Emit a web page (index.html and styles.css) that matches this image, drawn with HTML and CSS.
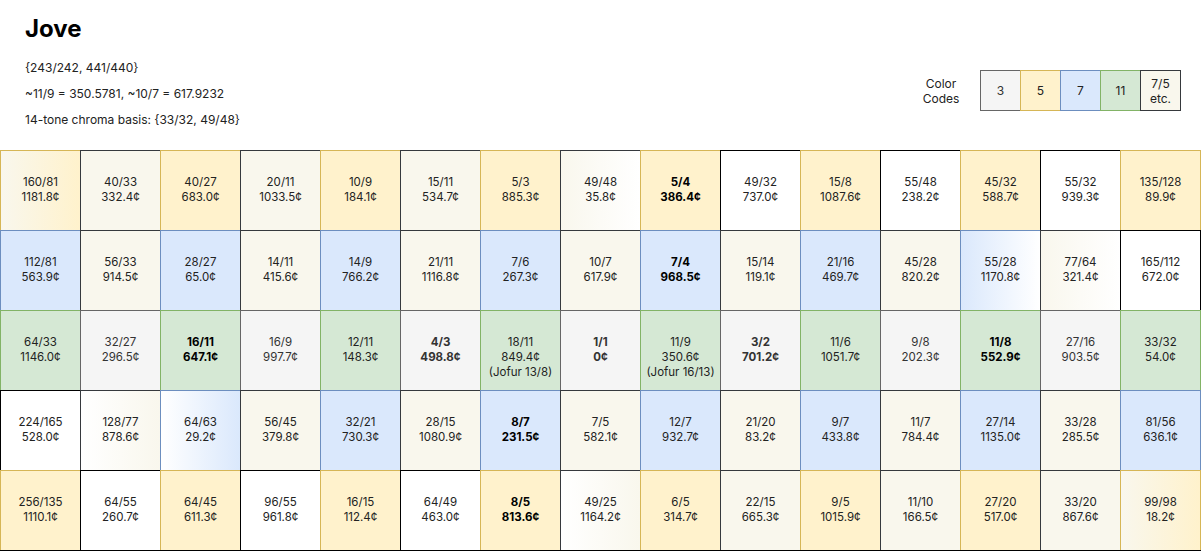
FILE: index.html
```html
<!DOCTYPE html>
<html lang="en">
<head>
<meta charset="utf-8">
<title>Jove</title>
<link rel="stylesheet" href="styles.css">
</head>
<body>
<header class="header">
  <div class="intro">
    <h1 class="title">Jove</h1>
    <p class="line">{243/242, 441/440}</p>
    <p class="line">~11/9 = 350.5781, ~10/7 = 617.9232</p>
    <p class="line">14-tone chroma basis: {33/32, 49/48}</p>
  </div>
  <div class="legend">
    <div class="legend-label">Color<br>Codes</div>
    <div class="keys">
      <div class="key gray">3</div>
      <div class="key yellow">5</div>
      <div class="key blue">7</div>
      <div class="key green">11</div>
      <div class="key etc">7/5<br>etc.</div>
    </div>
  </div>
</header>
<main class="grid">
  <div class="cell yellow g-beige-yellow">160/81<br>1181.8¢</div>
  <div class="cell etc">40/33<br>332.4¢</div>
  <div class="cell yellow">40/27<br>683.0¢</div>
  <div class="cell etc">20/11<br>1033.5¢</div>
  <div class="cell yellow">10/9<br>184.1¢</div>
  <div class="cell etc">15/11<br>534.7¢</div>
  <div class="cell yellow">5/3<br>885.3¢</div>
  <div class="cell etc g-beige-white">49/48<br>35.8¢</div>
  <div class="cell yellow bold">5/4<br>386.4¢</div>
  <div class="cell white">49/32<br>737.0¢</div>
  <div class="cell yellow">15/8<br>1087.6¢</div>
  <div class="cell white">55/48<br>238.2¢</div>
  <div class="cell yellow">45/32<br>588.7¢</div>
  <div class="cell white">55/32<br>939.3¢</div>
  <div class="cell yellow">135/128<br>89.9¢</div>

  <div class="cell blue">112/81<br>563.9¢</div>
  <div class="cell etc">56/33<br>914.5¢</div>
  <div class="cell blue">28/27<br>65.0¢</div>
  <div class="cell etc">14/11<br>415.6¢</div>
  <div class="cell blue">14/9<br>766.2¢</div>
  <div class="cell etc">21/11<br>1116.8¢</div>
  <div class="cell blue">7/6<br>267.3¢</div>
  <div class="cell etc">10/7<br>617.9¢</div>
  <div class="cell blue bold">7/4<br>968.5¢</div>
  <div class="cell etc">15/14<br>119.1¢</div>
  <div class="cell blue">21/16<br>469.7¢</div>
  <div class="cell etc">45/28<br>820.2¢</div>
  <div class="cell blue g-blue-white">55/28<br>1170.8¢</div>
  <div class="cell etc g-beige-white">77/64<br>321.4¢</div>
  <div class="cell white">165/112<br>672.0¢</div>

  <div class="cell green">64/33<br>1146.0¢</div>
  <div class="cell gray">32/27<br>296.5¢</div>
  <div class="cell green bold">16/11<br>647.1¢</div>
  <div class="cell gray">16/9<br>997.7¢</div>
  <div class="cell green">12/11<br>148.3¢</div>
  <div class="cell gray bold">4/3<br>498.8¢</div>
  <div class="cell green">18/11<br>849.4¢<br>(Jofur 13/8)</div>
  <div class="cell gray bold">1/1<br>0¢</div>
  <div class="cell green">11/9<br>350.6¢<br>(Jofur 16/13)</div>
  <div class="cell gray bold">3/2<br>701.2¢</div>
  <div class="cell green">11/6<br>1051.7¢</div>
  <div class="cell gray">9/8<br>202.3¢</div>
  <div class="cell green bold">11/8<br>552.9¢</div>
  <div class="cell gray">27/16<br>903.5¢</div>
  <div class="cell green">33/32<br>54.0¢</div>

  <div class="cell white">224/165<br>528.0¢</div>
  <div class="cell etc g-white-beige">128/77<br>878.6¢</div>
  <div class="cell blue g-white-blue">64/63<br>29.2¢</div>
  <div class="cell etc">56/45<br>379.8¢</div>
  <div class="cell blue">32/21<br>730.3¢</div>
  <div class="cell etc">28/15<br>1080.9¢</div>
  <div class="cell blue bold">8/7<br>231.5¢</div>
  <div class="cell etc">7/5<br>582.1¢</div>
  <div class="cell blue">12/7<br>932.7¢</div>
  <div class="cell etc">21/20<br>83.2¢</div>
  <div class="cell blue">9/7<br>433.8¢</div>
  <div class="cell etc">11/7<br>784.4¢</div>
  <div class="cell blue">27/14<br>1135.0¢</div>
  <div class="cell etc">33/28<br>285.5¢</div>
  <div class="cell blue">81/56<br>636.1¢</div>

  <div class="cell yellow">256/135<br>1110.1¢</div>
  <div class="cell white">64/55<br>260.7¢</div>
  <div class="cell yellow">64/45<br>611.3¢</div>
  <div class="cell white">96/55<br>961.8¢</div>
  <div class="cell yellow">16/15<br>112.4¢</div>
  <div class="cell white">64/49<br>463.0¢</div>
  <div class="cell yellow bold">8/5<br>813.6¢</div>
  <div class="cell etc g-white-beige">49/25<br>1164.2¢</div>
  <div class="cell yellow">6/5<br>314.7¢</div>
  <div class="cell etc">22/15<br>665.3¢</div>
  <div class="cell yellow">9/5<br>1015.9¢</div>
  <div class="cell etc">11/10<br>166.5¢</div>
  <div class="cell yellow">27/20<br>517.0¢</div>
  <div class="cell etc">33/20<br>867.6¢</div>
  <div class="cell yellow g-beige-yellow">99/98<br>18.2¢</div>

  <div class="cell white"></div>
  <div class="cell white"></div>
  <div class="cell white"></div>
  <div class="cell white"></div>
  <div class="cell white"></div>
  <div class="cell white"></div>
  <div class="cell white"></div>
  <div class="cell white"></div>
  <div class="cell white"></div>
  <div class="cell white"></div>
  <div class="cell white"></div>
  <div class="cell white"></div>
  <div class="cell white"></div>
  <div class="cell white"></div>
  <div class="cell white"></div>
</main>
</body>
</html>
```

FILE: styles.css
```css
html, body {
  margin: 0;
  padding: 0;
  background: #ffffff;
}

body {
  font-family: Inter, "Noto Sans", "DejaVu Sans", sans-serif;
  color: #222222;
}

.header {
  height: 150px;
  box-sizing: border-box;
  display: flex;
  justify-content: space-between;
  align-items: flex-start;
  padding: 0 20px 0 25px;
}

.title {
  margin: 14px 0 0;
  font-size: 24px;
  line-height: 30px;
  font-weight: 700;
  color: #000000;
}

.line {
  margin: 0;
  font-size: 12px;
  line-height: 26px;
  color: #222222;
}

.title + .line {
  margin-top: 11px;
}

.legend {
  margin-top: 70px;
  display: flex;
  align-items: center;
}

.legend-label {
  width: 60px;
  margin-right: 9px;
  text-align: center;
  font-size: 12px;
  line-height: 15px;
  color: #222222;
}

.keys {
  display: flex;
}

.key {
  width: 41px;
  height: 41px;
  box-sizing: border-box;
  border: 1px solid;
  display: flex;
  align-items: center;
  justify-content: center;
  text-align: center;
  font-size: 12px;
  line-height: 15px;
}

.key + .key {
  margin-left: -1px;
}

.grid {
  display: grid;
  grid-template-columns: repeat(15, 80px);
  grid-auto-rows: 80px;
}

.cell {
  width: 81px;
  height: 81px;
  box-sizing: border-box;
  border: 1px solid;
  padding-top: 24px;
  text-align: center;
  font-size: 11.5px;
  line-height: 15px;
  white-space: nowrap;
}

.bold {
  font-weight: 700;
  color: #000000;
}

.white {
  background: #ffffff;
  border-color: #000000;
}

.etc {
  background: #f9f7ed;
  border-color: #36393d;
}

.gray {
  background: #f5f5f5;
  border-color: #666666;
  color: #333333;
}

.yellow {
  background: #fff2cc;
  border-color: #d6b656;
}

.blue {
  background: #dae8fc;
  border-color: #6c8ebf;
}

.green {
  background: #d5e8d4;
  border-color: #82b366;
}

.g-beige-yellow {
  background: linear-gradient(to right, #f9f7ed, #fff2cc);
}

.g-beige-white {
  background: linear-gradient(to right, #f9f7ed, #ffffff);
}

.g-white-beige {
  background: linear-gradient(to right, #ffffff, #f9f7ed);
}

.g-blue-white {
  background: linear-gradient(to right, #dae8fc, #ffffff);
}

.g-white-blue {
  background: linear-gradient(to right, #ffffff, #dae8fc);
}
```
